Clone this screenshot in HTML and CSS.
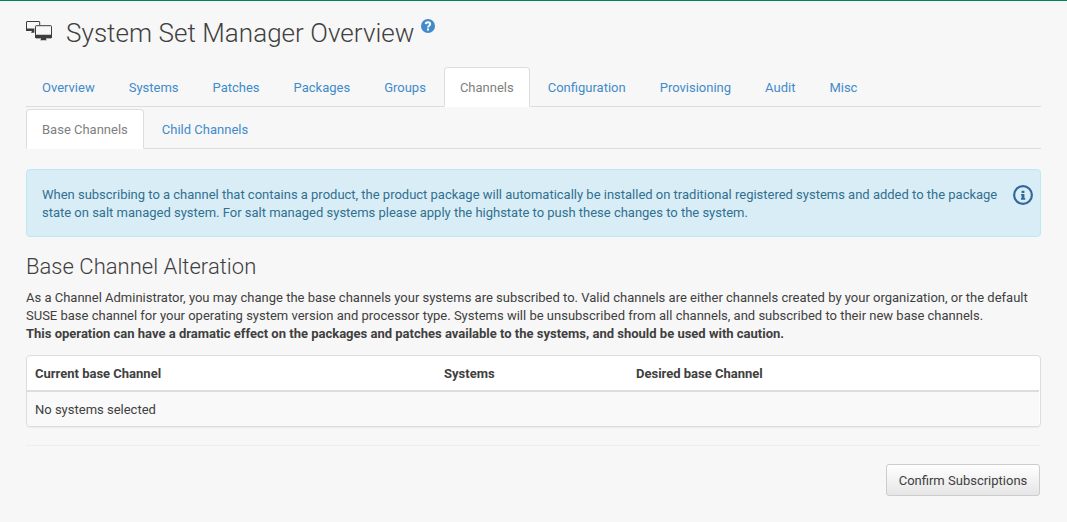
FILE: index.html
```html
<!DOCTYPE html>
<html lang="en">
<head>
<meta charset="utf-8">
<title>System Set Manager Overview</title>
<link rel="stylesheet" href="styles.css">
</head>
<body>
<main class="page">
  <header class="heading">
    <svg class="systems-icon" width="27" height="22" viewBox="0 0 27 22">
      <rect x=".5" y="1.5" width="13.2" height="9" rx=".5" fill="none" stroke="#3c3c3c"/>
      <path d="M0 8.5h9V11H0zM6 11h3v1.7H5z" fill="#3c3c3c"/>
      <rect x="8.4" y="5" width="18" height="14" fill="#f7f7f7"/>
      <rect x="9.5" y="5.7" width="16" height="12" rx=".7" fill="#f7f7f7" stroke="#3c3c3c"/>
      <path d="M9 14.8h17v2.5q0 1-1 1H10q-1 0-1-1zM15 18h5v1.2l1 1h-7l1-1z" fill="#3c3c3c"/>
    </svg>
    <h1>System Set Manager Overview</h1>
    <svg class="help-icon" width="14" height="14" viewBox="0 0 14 14">
      <circle cx="7" cy="7" r="7" fill="#428bca"/>
      <path d="M4.7 5.2C4.9 2.6 9.4 2.7 9.2 5.2C9.1 6.6 7 6.8 7 8.4" fill="none" stroke="#fff" stroke-width="2"/>
      <path d="M6 9.6h2v2H6z" fill="#fff"/>
    </svg>
  </header>
  <nav class="tabs">
    <a>Overview</a><a>Systems</a><a>Patches</a><a>Packages</a><a>Groups</a><a class="active">Channels</a><a>Configuration</a><a>Provisioning</a><a>Audit</a><a>Misc</a>
  </nav>
  <nav class="tabs subtabs">
    <a class="active">Base Channels</a><a>Child Channels</a>
  </nav>
  <section class="alert">
    <p>When subscribing to a channel that contains a product, the product package will automatically be installed on traditional registered systems and added to the package state on salt managed system. For salt managed systems please apply the highstate to push these changes to the system.</p>
    <svg class="info-icon" width="20" height="20" viewBox="0 0 20 20">
      <circle cx="10" cy="10" r="8.9" fill="none" stroke="#31699c" stroke-width="2.2"/>
      <path d="M8.6 5.8h2.8v2.1H8.6zM8 9h3.4v4.1h.8v1.6H8v-1.6h.6v-2.7H8z" fill="#31699c"/>
    </svg>
  </section>
  <h2>Base Channel Alteration</h2>
  <p class="description">As a Channel Administrator, you may change the base channels your systems are subscribed to. Valid channels are either channels created by your organization, or the default SUSE base channel for your operating system version and processor type. Systems will be unsubscribed from all channels, and subscribed to their new base channels.<br><strong>This operation can have a dramatic effect on the packages and patches available to the systems, and should be used with caution.</strong></p>
  <div class="panel">
    <table>
      <thead><tr><th class="current">Current base Channel</th><th class="systems">Systems</th><th>Desired base Channel</th></tr></thead>
      <tbody><tr><td colspan="3">No systems selected</td></tr></tbody>
    </table>
  </div>
  <hr>
  <div class="actions"><button>Confirm Subscriptions</button></div>
</main>
</body>
</html>
```
FILE: styles.css
```css
* { box-sizing: border-box; }
body {
  margin: 0;
  background: #f7f7f7;
  color: #404040;
  font: 13px/18px Roboto, sans-serif;
}
.page {
  height: 522px;
  padding: 0 26px;
  border-top: 1px solid #00865a;
}
.heading { display: flex; height: 66px; padding-top: 17px; }
.systems-icon { margin-top: 2px; }
h1 { margin: 0 0 0 13px; font-size: 26px; font-weight: 300; line-height: 30px; letter-spacing: .05px; white-space: nowrap; }
.help-icon { margin: 1px 0 0 6px; }
.tabs { display: flex; height: 40px; border-bottom: 1px solid #ddd; }
.tabs a {
  height: 40px;
  margin-right: 2px;
  padding: 11px 15px 9px;
  border: 1px solid transparent;
  border-radius: 4px 4px 0 0;
  color: #428bca;
}
.tabs .active { background: #fff; border-color: #ddd #ddd #fff; color: #808080; }
.subtabs { margin-top: 2px; }
.alert {
  display: flex;
  justify-content: space-between;
  height: 68px;
  margin-top: 20px;
  padding: 15px 7px 0 15px;
  border: 1px solid #bce8f1;
  border-radius: 4px;
  background: #d9edf7;
  color: #31708f;
}
.alert p { width: 960px; margin: 1px 0 0; letter-spacing: -.007px; }
h2 { margin: 17px 0 10px; font-size: 22px; font-weight: 300; line-height: 25px; letter-spacing: .03px; }
.description { margin: 0; }
.panel {
  height: 72px;
  margin-top: 12px;
  padding-right: 1px;
  border: 1px solid #ddd;
  border-radius: 4px;
  background: #fff;
  box-shadow: 0 1px 1px rgba(0, 0, 0, .05);
  overflow: hidden;
}
table { width: 100%; border-spacing: 0; table-layout: fixed; }
th, td { padding: 8px; text-align: left; }
th { height: 36px; padding-bottom: 7px; border-bottom: 2px solid #ddd; }
td { height: 34px; padding: 9px 8px 7px; background: #f9f9f9; }
.current { width: 409px; }
.systems { width: 192px; }
hr { height: 1px; margin: 18px 0; border: 0; background: #eee; }
.actions { display: flex; justify-content: flex-end; padding-right: 1px; }
button {
  width: 154px;
  height: 32px;
  padding: 0;
  border: 1px solid #ccc;
  border-radius: 3px;
  background: linear-gradient(#fff, #e6e6e6);
  color: #404040;
  font: 13px Roboto, sans-serif;
}
```
